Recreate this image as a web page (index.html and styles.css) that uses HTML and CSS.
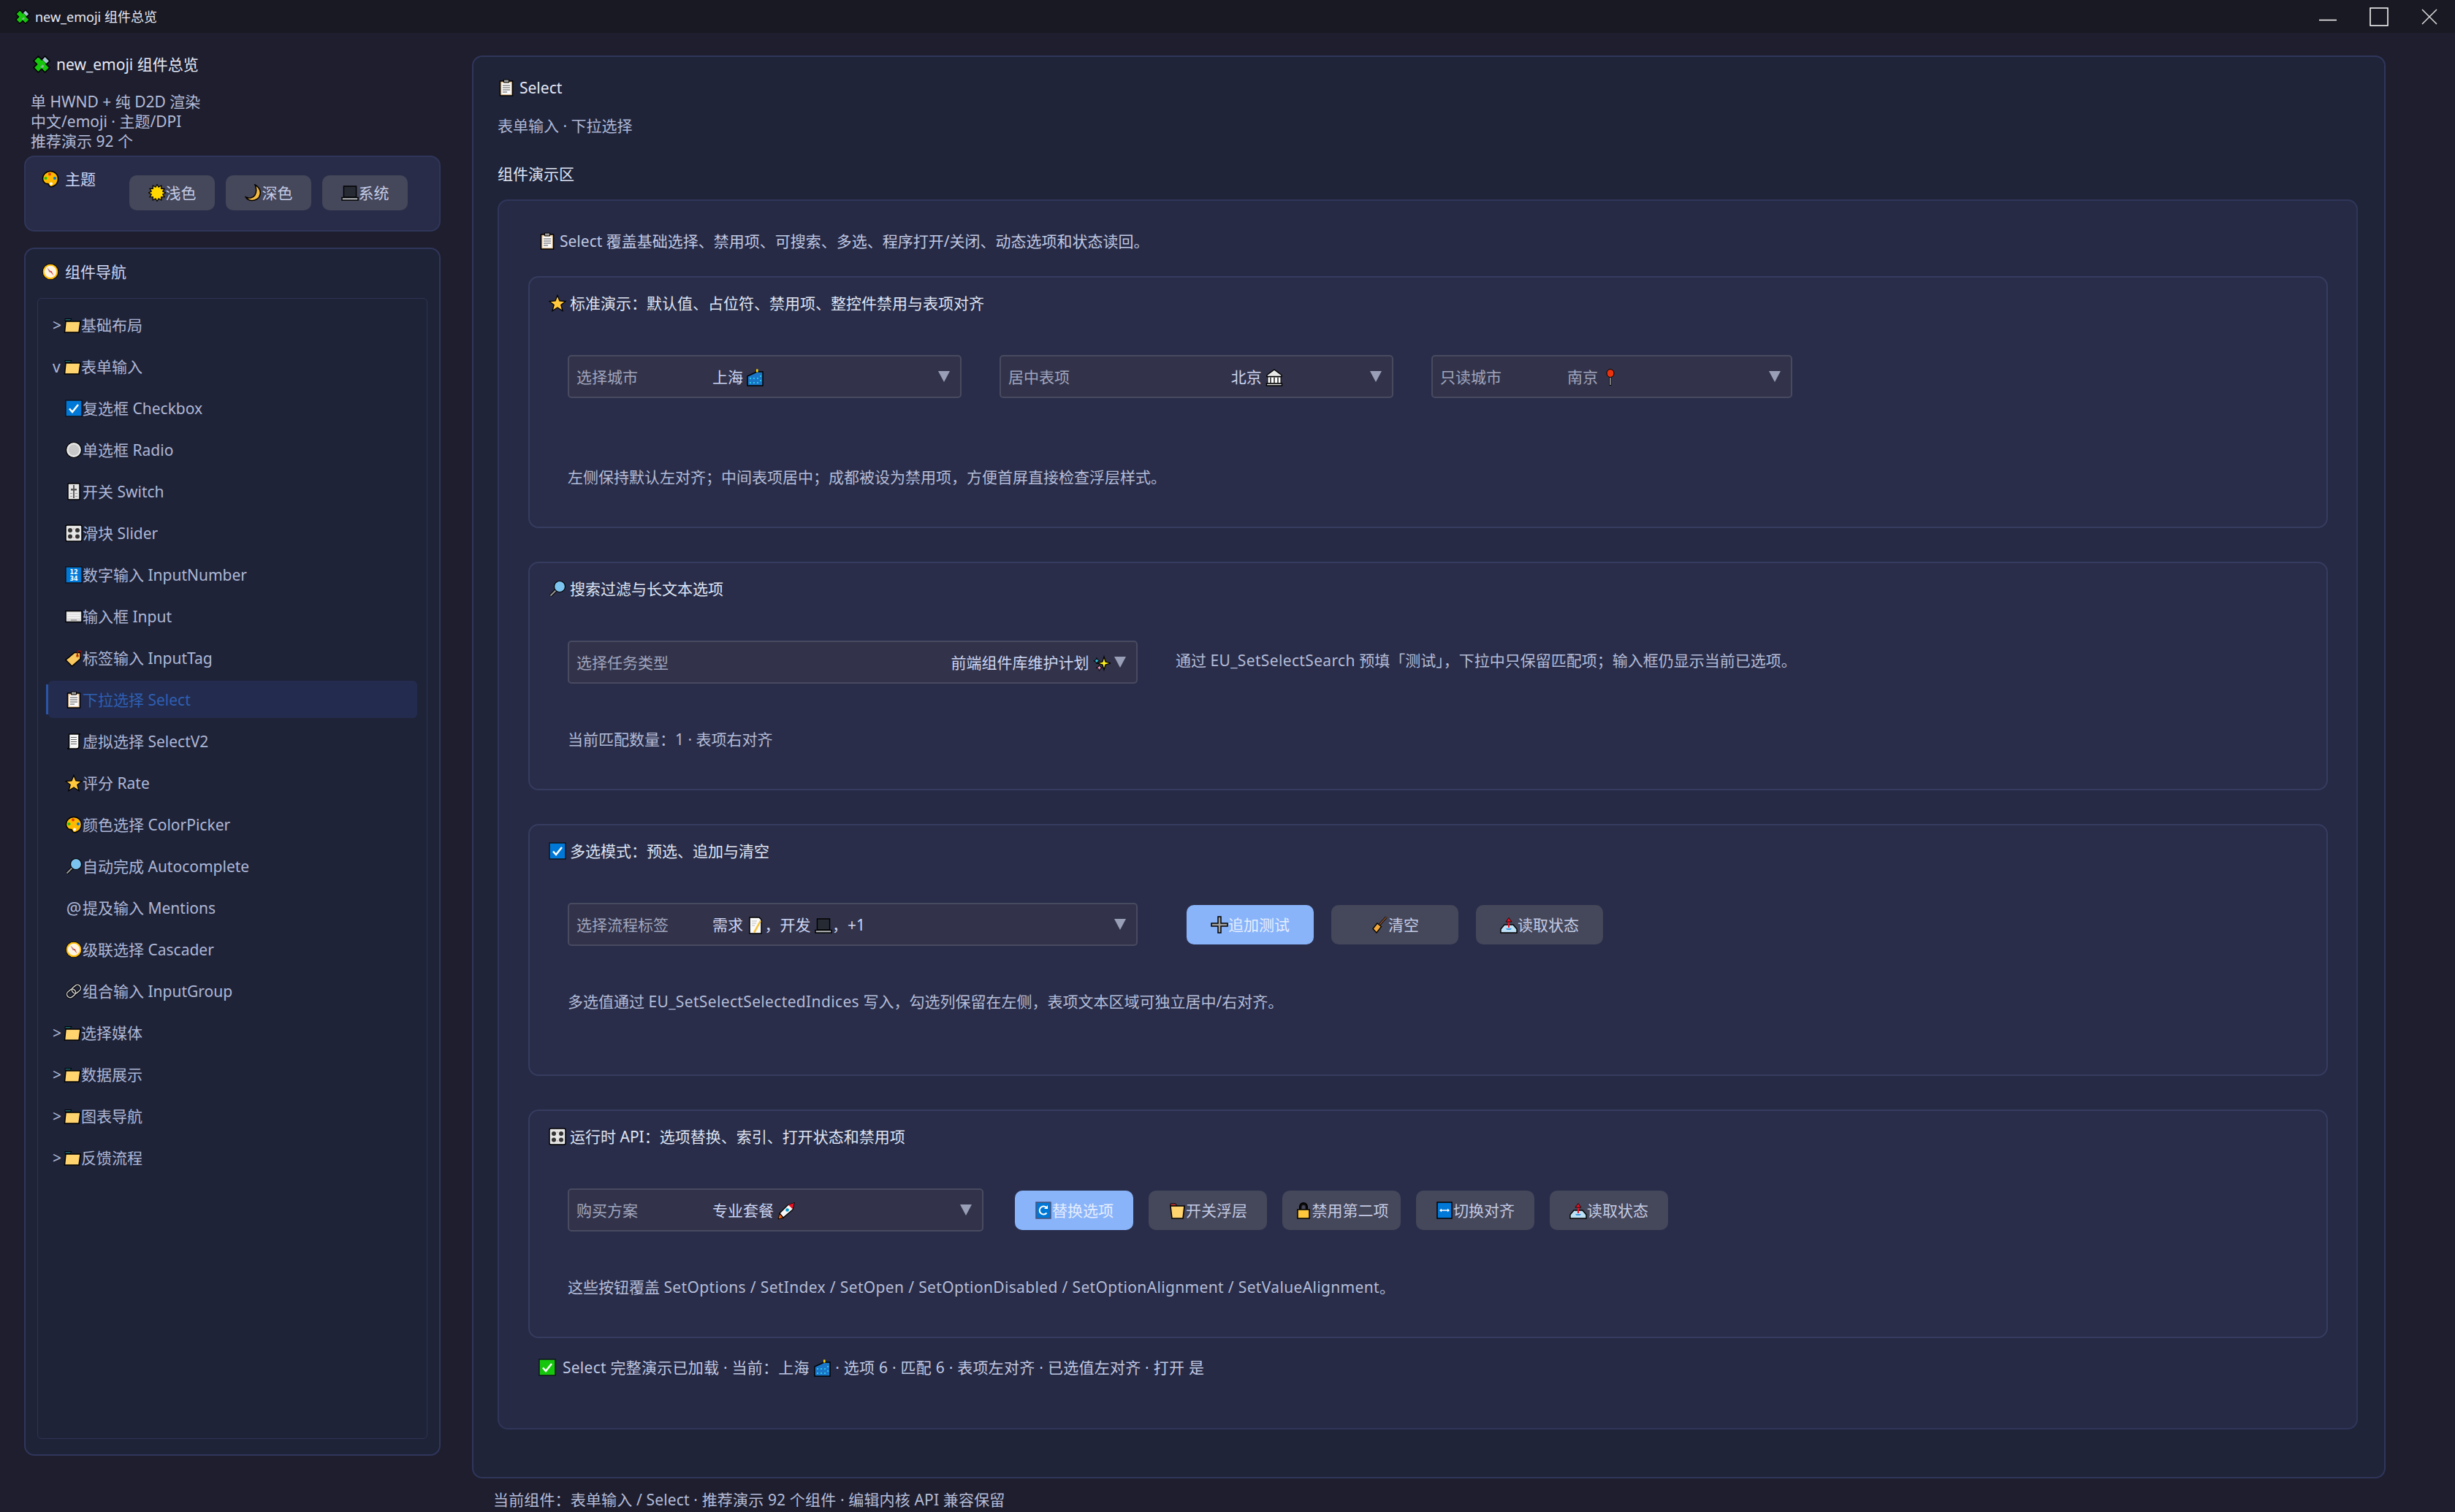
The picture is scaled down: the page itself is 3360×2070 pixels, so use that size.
FILE: index.html
```html
<!DOCTYPE html>
<html lang="zh-CN">
<head>
    <meta charset="UTF-8">
    <title>new_emoji 组件总览</title>
    <link rel="stylesheet" href="styles.css">
</head>
<body>
    <!-- 图标定义 -->
    <svg class="defs" width="0" height="0">
        <defs>
            <symbol id="i-puzzle" viewBox="0 0 24 24"><g transform="rotate(45 12 12)" stroke="#000" stroke-width="1.500"><path d="M7.500 1h9v6.500H23v9h-6.500V23h-9v-6.500H1v-9h6.500z" fill="#16c60c"/><path d="M7.500 1h9v6.500h-9z" fill="#a8c4d4"/><path d="M8.500 7h7v5h-7z" fill="#16c60c" stroke="none"/></g><path d="M10.500 15.500l3-3 2 2-3 3z" fill="#8fb0a0"/></symbol>
            <symbol id="i-palette" viewBox="0 0 24 24"><path d="M12 1.500C6 1.500 1.500 6 1.500 11.500c0 5 4 7.500 6.500 7 2-.3 1.500 1.500 2.500 3 1.500 1.500 4 1.500 5 .5 4-1.500 7-5 7-10.500C22.500 6 18 1.500 12 1.500z" fill="#ffb900" stroke="#000" stroke-width="1.500"/><circle cx="13" cy="18.500" r="2" fill="#fff"/><circle cx="5.500" cy="11" r="2" fill="#16c60c"/><circle cx="11" cy="5.500" r="2" fill="#e8400c"/><circle cx="18" cy="11" r="2" fill="#0078d7"/></symbol>
            <symbol id="i-sun" viewBox="0 0 24 24"><polygon points="12,.5 14.07,4.27 17.75,2.04 17.66,6.34 21.96,6.25 19.73,9.93 23.500,12 19.73,14.07 21.96,17.75 17.66,17.66 17.75,21.96 14.07,19.73 12,23.500 9.93,19.73 6.25,21.96 6.34,17.66 2.04,17.75 4.27,14.07 .5,12 4.27,9.93 2.04,6.25 6.34,6.34 6.25,2.04 9.93,4.27" fill="#ffd800" stroke="#000" stroke-width="1.200"/></symbol>
            <symbol id="i-moon" viewBox="0 0 24 24"><path d="M14 1c5 3 8 8 7 13-1 6-7 9-12 8.500-3-.3-6-2-7.500-4.500 5 2 10 1 12.500-3 2.500-4.500 2-9.500 0-14z" fill="#f5bb41" stroke="#000" stroke-width="1.500"/></symbol>
            <symbol id="i-laptop" viewBox="0 0 24 24"><path d="M3.500 3h17v15h-17z" fill="#2b2f3a" stroke="#000" stroke-width="1.500"/><path d="M5 4.500h14v12H5z" fill="#262a33"/><path d="M1 18.500h22v3.500H1z" fill="#b8bcc0" stroke="#000" stroke-width="1.500"/></symbol>
            <symbol id="i-compass" viewBox="0 0 24 24"><circle cx="12" cy="12" r="10.500" fill="#fff4e0" stroke="#000" stroke-width="1.200"/><circle cx="12" cy="12" r="9.300" fill="none" stroke="#ffb900" stroke-width="2"/><path d="M7.500 6.500 12 12l-1.500 1z" fill="#9aa"/><path d="M16.500 17.500 12 12l1.500-1z" fill="#d13438"/><path d="M7.500 6.500 12 11l1.500 1L12 13z" fill="#d13438"/></symbol>
            <symbol id="i-folder" viewBox="0 0 24 24"><path d="M2 6h7l2-2.500H2z" fill="#1c6a75" stroke="#000"/><path d="M3 7h20l-2 15H1.500z" fill="#ffd36e" stroke="#000" stroke-width="1.500"/></symbol>
            <symbol id="i-check" viewBox="0 0 24 24"><path d="M1 1h22v22H1z" fill="#0078d7" stroke="#10131d" stroke-width="1.500"/><path d="m6 12.500 4 4.500 8-10" fill="none" stroke="#fff" stroke-width="2.500"/></symbol>
            <symbol id="i-ok" viewBox="0 0 24 24"><path d="M1 1h22v22H1z" fill="#16c60c" stroke="#10131d" stroke-width="1.500"/><path d="m6 12.500 4 4.500 8-10" fill="none" stroke="#fff" stroke-width="2.500"/></symbol>
            <symbol id="i-radio" viewBox="0 0 24 24"><circle cx="12" cy="12" r="10.500" fill="#e8e8e8" stroke="#000" stroke-width="1.200"/><circle cx="12" cy="12" r="7.500" fill="#c8c8c8"/></symbol>
            <symbol id="i-level" viewBox="0 0 24 24"><path d="M5 1h14q1 0 1 1v20q0 1-1 1H5q-1 0-1-1V2q0-1 1-1z" fill="#e4e4e4" stroke="#000" stroke-width="1.500"/><path d="M12 3v18" stroke="#333" stroke-width="1.500"/><path d="M8 8h8v2.500H8z" fill="#555"/><path d="M7 14h3v1H7zm7 0h3v1h-3zM7 18h3v1H7zm7 0h3v1h-3z" fill="#999"/></symbol>
            <symbol id="i-knobs" viewBox="0 0 24 24"><rect x="1" y="1" width="22" height="22" rx="2" fill="#e6e6e6" stroke="#000" stroke-width="1.500"/><circle cx="7" cy="8" r="3" fill="#333"/><circle cx="17" cy="8" r="3" fill="#333"/><circle cx="7" cy="16.500" r="3" fill="#333"/><circle cx="17" cy="16.500" r="3" fill="#333"/><path d="M11.500 5.500h1v1h-1zm0 12h1v1h-1z" fill="#d13438"/></symbol>
            <symbol id="i-num" viewBox="0 0 24 24"><path d="M1 1h22v22H1z" fill="#0078d7" stroke="#10131d" stroke-width="1.500"/><text x="12" y="10.500" font-size="8" font-weight="700" fill="#fff" text-anchor="middle" font-family="DejaVu Sans">12</text><text x="12" y="20" font-size="8" font-weight="700" fill="#fff" text-anchor="middle" font-family="DejaVu Sans">34</text></symbol>
            <symbol id="i-keyboard" viewBox="0 0 24 24"><path d="M1 4.500h22v15H1z" fill="#dcdcdc" stroke="#000" stroke-width="1.500"/><path d="M3 7.500h18M3 10.500h18M3 13.500h18" stroke="#f6f6f6" stroke-width="1.500"/><path d="M8 16h8v2H8z" fill="#aaa"/></symbol>
            <symbol id="i-tag" viewBox="0 0 24 24"><path d="M13 4.500h8V13L9.500 23 1 14.500z" fill="#f9c85e" stroke="#000" stroke-width="1.500"/><circle cx="17" cy="9" r="2" fill="#c6560c"/><path d="M17 9c-1-4 0-7 3-7 2.500 0 2.500 4 2 8" fill="none" stroke="#8d0f0f" stroke-width="1.300"/></symbol>
            <symbol id="i-clip" viewBox="0 0 24 24"><path d="M3.500 3h17v20h-17z" fill="#e8c698" stroke="#000" stroke-width="1.500"/><path d="M5.500 5.500h13V21h-13z" fill="#fafafa"/><path d="M8.500 1h7v4h-7z" fill="#9a9a9a" stroke="#000"/><path d="M7 9h10M7 12h10M7 15h10M7 18h6" stroke="#555" stroke-width="1.200"/></symbol>
            <symbol id="i-scroll" viewBox="0 0 24 24"><path d="M6 2h15c-1.500 0-2 1-2 2.500V19c0 2-1 3-3 3H3c2 0 2.500-1 2.500-3V3.500C5.500 2.500 5.500 2 6 2z" fill="#f7f7f7" stroke="#000" stroke-width="1.500"/><path d="M8 6.500h8M8 9.500h8M8 12.500h8M8 15.500h8" stroke="#666" stroke-width="1.200"/></symbol>
            <symbol id="i-star" viewBox="0 0 24 24"><polygon points="12,1.500 15,9 23,9.500 16.800,14.500 19,22.500 12,18 5,22.500 7.200,14.500 1,9.500 9,9" fill="#ffc83d" stroke="#000" stroke-width="1.300"/></symbol>
            <symbol id="i-sparkle" viewBox="0 0 24 24"><path d="m15 3 2 7 7 2-7 2-2 7-2-7-7-2 7-2z" fill="#fff01f" stroke="#000" stroke-width="1.300"/><path d="m5 4.500 1.200 3 3 1.200-3 1.200L5 13l-1.200-3-3-1.100 3-1.200z" fill="#35c8e8" stroke="#000"/><path d="m8.500 14 1.200 3 3 1.200-3 1.200-1.200 3-1.200-3-3-1.200 3-1.200z" fill="#f29ac2" stroke="#000"/></symbol>
            <symbol id="i-search" viewBox="0 0 24 24"><path d="m10 14-7.500 7.500" stroke="#000" stroke-width="4"/><path d="m10 14-7.500 7.500" stroke="#9a9a9a" stroke-width="2"/><circle cx="15" cy="9" r="7.500" fill="#7cc4f0" stroke="#000" stroke-width="1.200"/></symbol>
            <symbol id="i-link" viewBox="0 0 24 24"><g fill="none" transform="rotate(-40 12 12)"><rect x="1" y="7.500" width="13" height="9" rx="4.500" stroke="#000" stroke-width="3.500"/><rect x="10" y="7.500" width="13" height="9" rx="4.500" stroke="#000" stroke-width="3.500"/><rect x="1" y="7.500" width="13" height="9" rx="4.500" stroke="#ccc" stroke-width="1.500"/><rect x="10" y="7.500" width="13" height="9" rx="4.500" stroke="#ccc" stroke-width="1.500"/></g></symbol>
            <symbol id="i-city" viewBox="0 0 24 24"><path d="M1 10 14 4h8v19H1z" fill="#1976c8" stroke="#000" stroke-width="1.500"/><path d="M13 .5h2.500v4H13z" fill="#ffd800"/><path d="M4 12h2v2H4zm5 0h2v2H9zm5 0h2v2h-2zm4-3h2v2h-2zM4 18h2v2H4zm5 0h2v2H9zm5 0h2v2h-2zm4-3h2v2h-2z" fill="#2cc4e8"/></symbol>
            <symbol id="i-bank" viewBox="0 0 24 24"><path d="M12 1 2 8.500v2h20v-2z" fill="#e8e8e8" stroke="#000" stroke-width="1.400"/><path d="M3 11h18v9H3z" fill="#fff" stroke="#000"/><path d="M6 11.500h2V20H6zm5 0h2V20h-2zm5 0h2V20h-2z" fill="#555"/><path d="M1.500 20h21v3h-21z" fill="#ddd" stroke="#000" stroke-width="1.400"/></symbol>
            <symbol id="i-pin" viewBox="0 0 24 24"><path d="M11 9h2v13.500h-2z" fill="#f4f4f4" stroke="#000"/><ellipse cx="12" cy="6" rx="5" ry="5.500" fill="#e8330f" stroke="#000" stroke-width="1"/></symbol>
            <symbol id="i-memo" viewBox="0 0 24 24"><path d="M4 1h13l3 3v19H4z" fill="#fafafa" stroke="#000" stroke-width="1.500"/><path d="M7 6h7M7 9h6M7 12h4" stroke="#bbb" stroke-width="1.200"/><path d="m9 21 9-16 2 1-8.500 16z" fill="#f9c23c"/></symbol>
            <symbol id="i-rocket" viewBox="0 0 24 24"><path d="m1 23 2-8 6 6z" fill="#f7630c" stroke="#000"/><path d="M8 21 3 15 14 4l9-3-2 9z" fill="#f7f7f7" stroke="#000" stroke-width="1.300"/><path d="m15 3.500 8-2.500-2.500 8z" fill="#e81224"/><circle cx="13.500" cy="10.500" r="2.300" fill="#0099cc"/></symbol>
            <symbol id="i-plus" viewBox="0 0 24 24"><path d="M10 1h4v9h9v4h-9v9h-4v-9H1v-4h9z" fill="#a0a0a0" stroke="#000" stroke-width="1.500"/></symbol>
            <symbol id="i-broom" viewBox="0 0 24 24"><path d="M21.500 1.500 11 13" stroke="#000" stroke-width="3"/><path d="M21.500 1.500 11 13" stroke="#8e562e" stroke-width="1.500"/><path d="m9 10 5.500 4.500L8 23l-5-5.500z" fill="#f2a93b" stroke="#000" stroke-width="1.300"/></symbol>
            <symbol id="i-outbox" viewBox="0 0 24 24"><path d="M6 12h12l5 6v5H1v-5z" fill="#bde0f5" stroke="#000" stroke-width="1.400"/><path d="M8 17h8l-1.500 2h-5z" fill="#3a96dd"/><path d="M12 16V7" stroke="#e81224" stroke-width="2"/><path d="m8 8 4-5.500L16 8z" fill="#e81224" stroke="#000" stroke-width=".8"/></symbol>
            <symbol id="i-refresh" viewBox="0 0 24 24"><path d="M2 1h20v22H2z" fill="#0078d7" stroke="#4a5078" stroke-width="1.500"/><path d="M16.500 8.500a5.500 5.500 0 1 0 0 7" fill="none" stroke="#fff" stroke-width="2"/><path d="M18 5v5h-5z" fill="#fff"/></symbol>
            <symbol id="i-fold2" viewBox="0 0 24 24"><path d="M3 3h7l2 3h-9z" fill="#d13438" stroke="#000"/><path d="M3 6h19l-2 17H5z" fill="#ffd36e" stroke="#000" stroke-width="1.500"/></symbol>
            <symbol id="i-lock" viewBox="0 0 24 24"><path d="M7 11V7a5 5 0 0 1 10 0v4" fill="#111" stroke="#000" stroke-width="2"/><path d="M9.500 11V7.500a2.500 2.500 0 0 1 5 0V11" fill="#45475a"/><path d="M4 11h16v12H4z" fill="#ffc83d" stroke="#000" stroke-width="1.500"/></symbol>
            <symbol id="i-swap" viewBox="0 0 24 24"><path d="M2 1h20v22H2z" fill="#0078d7" stroke="#000" stroke-width="1.500"/><path d="M7 12h10" stroke="#fff" stroke-width="1.500"/><path d="m5 12 3-2.500v5zm14 0-3-2.500v5z" fill="#fff"/></symbol>
        </defs>
    </svg>

    <div class="titlebar">
        <svg class="ico ico-sm"><use href="#i-puzzle"/></svg>
        <span class="titlebar-text">new_emoji 组件总览</span>
        <div class="win-buttons">
            <svg width="24" height="24" viewBox="0 0 24 24"><path d="M0 16.500h24" stroke="#fff" stroke-width="1.500"/></svg>
            <svg width="26" height="26" viewBox="0 0 26 26"><path d="M1 1h24v24H1z" fill="none" stroke="#fff" stroke-width="1.500"/></svg>
            <svg width="22" height="22" viewBox="0 0 22 22"><path d="m1 1 20 20M21 1 1 21" stroke="#ddd" stroke-width="1.500"/></svg>
        </div>
    </div>

    <div class="layout">
        <aside class="sidebar">
            <div class="app-title"><svg class="ico"><use href="#i-puzzle"/></svg><span>new_emoji 组件总览</span></div>
            <div class="app-info">
                <div>单 HWND + 纯 D2D 渲染</div>
                <div>中文/emoji · 主题/DPI</div>
                <div>推荐演示 92 个</div>
            </div>

            <div class="panel theme-panel">
                <div class="theme-label"><svg class="ico"><use href="#i-palette"/></svg><span>主题</span></div>
                <div class="theme-buttons">
                    <div class="btn"><svg class="ico"><use href="#i-sun"/></svg>浅色</div>
                    <div class="btn"><svg class="ico"><use href="#i-moon"/></svg>深色</div>
                    <div class="btn"><svg class="ico"><use href="#i-laptop"/></svg>系统</div>
                </div>
            </div>

            <div class="panel nav-panel">
                <div class="nav-title"><svg class="ico"><use href="#i-compass"/></svg><span>组件导航</span></div>
                <div class="tree">
                    <div class="row group"><span class="caret">&gt;</span><svg class="ico"><use href="#i-folder"/></svg>基础布局</div>
                    <div class="row group"><span class="caret">v</span><svg class="ico"><use href="#i-folder"/></svg>表单输入</div>
                    <div class="row"><svg class="ico"><use href="#i-check"/></svg>复选框 Checkbox</div>
                    <div class="row"><svg class="ico"><use href="#i-radio"/></svg>单选框 Radio</div>
                    <div class="row"><svg class="ico"><use href="#i-level"/></svg>开关 Switch</div>
                    <div class="row"><svg class="ico"><use href="#i-knobs"/></svg>滑块 Slider</div>
                    <div class="row"><svg class="ico"><use href="#i-num"/></svg>数字输入 InputNumber</div>
                    <div class="row"><svg class="ico"><use href="#i-keyboard"/></svg>输入框 Input</div>
                    <div class="row"><svg class="ico"><use href="#i-tag"/></svg>标签输入 InputTag</div>
                    <div class="row active"><span class="row-inner"><svg class="ico"><use href="#i-clip"/></svg>下拉选择 Select</span></div>
                    <div class="row"><svg class="ico"><use href="#i-scroll"/></svg>虚拟选择 SelectV2</div>
                    <div class="row"><svg class="ico"><use href="#i-star"/></svg>评分 Rate</div>
                    <div class="row"><svg class="ico"><use href="#i-palette"/></svg>颜色选择 ColorPicker</div>
                    <div class="row"><svg class="ico"><use href="#i-search"/></svg>自动完成 Autocomplete</div>
                    <div class="row"><span class="ico at">@</span>提及输入 Mentions</div>
                    <div class="row"><svg class="ico"><use href="#i-compass"/></svg>级联选择 Cascader</div>
                    <div class="row"><svg class="ico"><use href="#i-link"/></svg>组合输入 InputGroup</div>
                    <div class="row group"><span class="caret">&gt;</span><svg class="ico"><use href="#i-folder"/></svg>选择媒体</div>
                    <div class="row group"><span class="caret">&gt;</span><svg class="ico"><use href="#i-folder"/></svg>数据展示</div>
                    <div class="row group"><span class="caret">&gt;</span><svg class="ico"><use href="#i-folder"/></svg>图表导航</div>
                    <div class="row group"><span class="caret">&gt;</span><svg class="ico"><use href="#i-folder"/></svg>反馈流程</div>
                </div>
            </div>
        </aside>

        <div class="main-col">
            <main class="panel main-panel">
                <div class="page-title"><svg class="ico"><use href="#i-clip"/></svg><span>Select</span></div>
                <div class="page-sub">表单输入 · 下拉选择</div>
                <div class="page-head">组件演示区</div>

                <div class="panel demo">
                    <div class="intro"><svg class="ico"><use href="#i-clip"/></svg><span>Select 覆盖基础选择、禁用项、可搜索、多选、程序打开/关闭、动态选项和状态读回。</span></div>

                    <section class="sec sec-tall">
                        <div class="sec-title"><svg class="ico"><use href="#i-star"/></svg><span>标准演示：默认值、占位符、禁用项、整控件禁用与表项对齐</span></div>
                        <div class="sec-row gap-52">
                            <div class="sel w-539"><span class="sel-label">选择城市</span><span class="sel-value">上海 <svg class="ico"><use href="#i-city"/></svg></span><span class="sel-arrow"></span></div>
                            <div class="sel w-539"><span class="sel-label">居中表项</span><span class="sel-value center">北京 <svg class="ico"><use href="#i-bank"/></svg></span><span class="sel-arrow"></span></div>
                            <div class="sel w-494 readonly"><span class="sel-label short">只读城市</span><span class="sel-value">南京 <svg class="ico"><use href="#i-pin"/></svg></span><span class="sel-arrow"></span></div>
                        </div>
                        <p class="note note-far">左侧保持默认左对齐；中间表项居中；成都被设为禁用项，方便首屏直接检查浮层样式。</p>
                    </section>

                    <section class="sec">
                        <div class="sec-title"><svg class="ico"><use href="#i-search"/></svg><span>搜索过滤与长文本选项</span></div>
                        <div class="sec-row gap-52">
                            <div class="sel w-780"><span class="sel-label">选择任务类型</span><span class="sel-value right">前端组件库维护计划 <svg class="ico"><use href="#i-sparkle"/></svg></span><span class="sel-arrow"></span></div>
                            <span class="note inline">通过 <span class="api">EU_SetSelectSearch</span> 预填「测试」，下拉中只保留匹配项；输入框仍显示当前已选项。</span>
                        </div>
                        <p class="note">当前匹配数量：1 · 表项右对齐</p>
                    </section>

                    <section class="sec sec-tall">
                        <div class="sec-title"><svg class="ico"><use href="#i-check"/></svg><span>多选模式：预选、追加与清空</span></div>
                        <div class="sec-row gap-67">
                            <div class="sel w-780"><span class="sel-label">选择流程标签</span><span class="sel-value">需求 <svg class="ico"><use href="#i-memo"/></svg>，开发 <svg class="ico"><use href="#i-laptop"/></svg>，+1</span><span class="sel-arrow"></span></div>
                            <div class="btn-row wide">
                                <div class="btn primary"><svg class="ico"><use href="#i-plus"/></svg>追加测试</div>
                                <div class="btn"><svg class="ico"><use href="#i-broom"/></svg>清空</div>
                                <div class="btn"><svg class="ico"><use href="#i-outbox"/></svg>读取状态</div>
                            </div>
                        </div>
                        <p class="note">多选值通过 <span class="api">EU_SetSelectSelectedIndices</span> 写入，勾选列保留在左侧，表项文本区域可独立居中/右对齐。</p>
                    </section>

                    <section class="sec">
                        <div class="sec-title"><svg class="ico"><use href="#i-knobs"/></svg><span>运行时 API：选项替换、索引、打开状态和禁用项</span></div>
                        <div class="sec-row gap-43">
                            <div class="sel w-569"><span class="sel-label">购买方案</span><span class="sel-value">专业套餐 <svg class="ico"><use href="#i-rocket"/></svg></span><span class="sel-arrow"></span></div>
                            <div class="btn-row">
                                <div class="btn primary"><svg class="ico"><use href="#i-refresh"/></svg>替换选项</div>
                                <div class="btn"><svg class="ico"><use href="#i-fold2"/></svg>开关浮层</div>
                                <div class="btn"><svg class="ico"><use href="#i-lock"/></svg>禁用第二项</div>
                                <div class="btn"><svg class="ico"><use href="#i-swap"/></svg>切换对齐</div>
                                <div class="btn"><svg class="ico"><use href="#i-outbox"/></svg>读取状态</div>
                            </div>
                        </div>
                        <p class="note">这些按钮覆盖 <span class="api">SetOptions / SetIndex / SetOpen / SetOptionDisabled / SetOptionAlignment / SetValueAlignment</span>。</p>
                    </section>

                    <div class="status"><svg class="ico"><use href="#i-ok"/></svg><span>Select 完整演示已加载 · 当前：上海 <svg class="ico"><use href="#i-city"/></svg> · 选项 6 · 匹配 6 · 表项左对齐 · 已选值左对齐 · 打开 是</span></div>
                </div>
            </main>
            <div class="footer">当前组件：表单输入 / Select · 推荐演示 92 个组件 · 编辑内核 API 兼容保留</div>
        </div>
    </div>
</body>
</html>
```

FILE: styles.css
```css
body {
    margin: 0;
    width: 3360px;
    height: 2070px;
    overflow: hidden;
    background-color: #1e1e2e;
    color: #cdd6f4;
    font-family: "Noto Sans", "Noto Sans CJK SC", sans-serif;
    font-size: 21px;
    line-height: 28px;
}
.defs {
    position: absolute;
}
.ico {
    width: 24px;
    height: 24px;
    flex: none;
    vertical-align: -5px;
}
.ico-sm {
    width: 20px;
    height: 20px;
}

/* 标题栏 */
.titlebar {
    height: 45px;
    display: flex;
    align-items: center;
    padding: 0 24px 0 21px;
    background-color: #191923;
    color: #e6e9f5;
    font-size: 18px;
}
.titlebar-text {
    margin-left: 7px;
}
.win-buttons {
    margin-left: auto;
    display: flex;
    align-items: center;
    gap: 45px;
}

.layout {
    display: flex;
    align-items: flex-start;
}
.panel {
    box-sizing: border-box;
    border: 2px solid #30365a;
    border-radius: 14px;
}

/* 左侧栏 */
.sidebar {
    width: 570px;
    margin-left: 33px;
}
.app-title {
    display: flex;
    align-items: center;
    gap: 8px;
    margin: 29px 0 0 12px;
    color: #e6e9f5;
}
.app-info {
    margin: 24px 0 6px 9px;
    color: #b4bcd8;
    line-height: 27px;
}
.theme-panel {
    height: 104px;
    display: flex;
    align-items: flex-start;
    padding: 25px 0 0 22px;
    background-color: #282c48;
}
.theme-label {
    width: 120px;
    margin-top: -9px;
    display: flex;
    align-items: center;
    gap: 8px;
}
.theme-buttons {
    display: flex;
    gap: 15px;
}
.btn {
    box-sizing: border-box;
    width: 117px;
    height: 48px;
    display: flex;
    align-items: center;
    justify-content: center;
    border-radius: 10px;
    background-color: #45475a;
    color: #c4cbe4;
}
.nav-panel {
    height: 1654px;
    margin-top: 22px;
    padding: 0 16px;
    background-color: #1e2338;
}
.nav-title {
    display: flex;
    align-items: center;
    gap: 8px;
    height: 62px;
    padding-left: 6px;
}
.tree {
    box-sizing: border-box;
    height: 1562px;
    margin-top: 5px;
    padding-top: 7px;
    border: 1px solid #2e3454;
    border-radius: 6px;
    color: #aeb7d6;
}
.row {
    height: 57px;
    display: flex;
    align-items: center;
    padding-left: 37px;
}
.row.group {
    padding-left: 20px;
}
.caret {
    width: 15px;
    color: #aeb7d6;
}
.at {
    display: block;
    line-height: 24px;
    font-size: 23px;
    text-align: center;
}
.row.active {
    padding-left: 0;
}
.row-inner {
    box-sizing: border-box;
    width: 505px;
    height: 51px;
    margin-left: 14px;
    display: flex;
    align-items: center;
    padding-left: 23px;
    border-radius: 6px;
    background-color: #232c4e;
    color: #2f5fb3;
    position: relative;
}
.row-inner::before {
    content: "";
    position: absolute;
    left: -3px;
    top: 5px;
    width: 3px;
    height: 41px;
    background-color: #2b55a5;
}

/* 主区域 */
.main-col {
    margin-left: 43px;
}
.main-panel {
    width: 2619px;
    height: 1948px;
    margin-top: 31px;
    padding: 28px 33px 0;
    background-color: #1f2439;
}
.page-title {
    display: flex;
    align-items: center;
    gap: 6px;
    color: #e6e9f5;
}
.page-sub {
    margin-top: 24px;
    color: #aeb7d6;
}
.page-head {
    margin-top: 38px;
    color: #dfe4f3;
}
.demo {
    box-sizing: border-box;
    width: 2546px;
    height: 1684px;
    margin-top: 21px;
    padding: 0 39px 0 40px;
    background-color: #262a45;
}
.intro {
    height: 103px;
    box-sizing: border-box;
    display: flex;
    align-items: center;
    gap: 5px;
    padding: 6px 0 0 14px;
    color: #c0c8e2;
}
.sec {
    box-sizing: border-box;
    height: 313px;
    margin-bottom: 46px;
    padding: 0 0 0 52px;
    border: 2px solid #363c60;
    border-radius: 14px;
    background-color: #292d49;
}
.sec-tall {
    height: 345px;
}
.sec-title {
    height: 70px;
    display: flex;
    align-items: center;
    gap: 5px;
    margin-left: -26px;
    color: #dfe4f3;
}
.sec-row {
    display: flex;
    align-items: center;
    margin-top: 36px;
}
.gap-52 { gap: 52px; }
.gap-67 { gap: 67px; }
.gap-43 { gap: 43px; }
.w-539 { width: 539px; }
.w-494 { width: 494px; }
.w-780 { width: 780px; }
.w-569 { width: 569px; }
.sel {
    box-sizing: border-box;
    height: 59px;
    display: flex;
    align-items: center;
    padding: 0 14px 0 10px;
    border: 2px solid #484a60;
    border-radius: 5px;
    background-color: #32334a;
}
.sel-label {
    width: 186px;
    flex: none;
    color: #a0a5bd;
}
.sel-label.short {
    width: 174px;
}
.sel-value {
    flex: 1;
    white-space: nowrap;
}
.sel-value.center {
    text-align: center;
}
.sel-value.right {
    text-align: right;
    padding-right: 5px;
}
.readonly .sel-value {
    color: #a0a5bd;
}
.sel-arrow {
    flex: none;
    width: 0;
    height: 0;
    border-left: 8px solid transparent;
    border-right: 8px solid transparent;
    border-top: 15px solid #9a9fb8;
}
.btn-row {
    display: flex;
    gap: 21px;
}
.btn-row .btn {
    width: 162px;
    height: 54px;
}
.btn-row.wide {
    gap: 24px;
}
.btn-row.wide .btn {
    width: 174px;
}
.btn.primary {
    background-color: #89b4fa;
    color: #e6eeff;
}
.note {
    margin: 62px 0 0;
    color: #b4bcd8;
}
.note-far {
    margin-top: 94px;
}
.note.inline {
    margin: 0;
    padding-bottom: 6px;
}
.api {
    letter-spacing: .35px;
}
.status {
    display: flex;
    align-items: center;
    gap: 9px;
    margin: -20px 0 0 14px;
    color: #c0c8e2;
    letter-spacing: .25px;
}
.footer {
    margin: 15px 0 0 29px;
    color: #b4bcd8;
    letter-spacing: .15px;
}
```
